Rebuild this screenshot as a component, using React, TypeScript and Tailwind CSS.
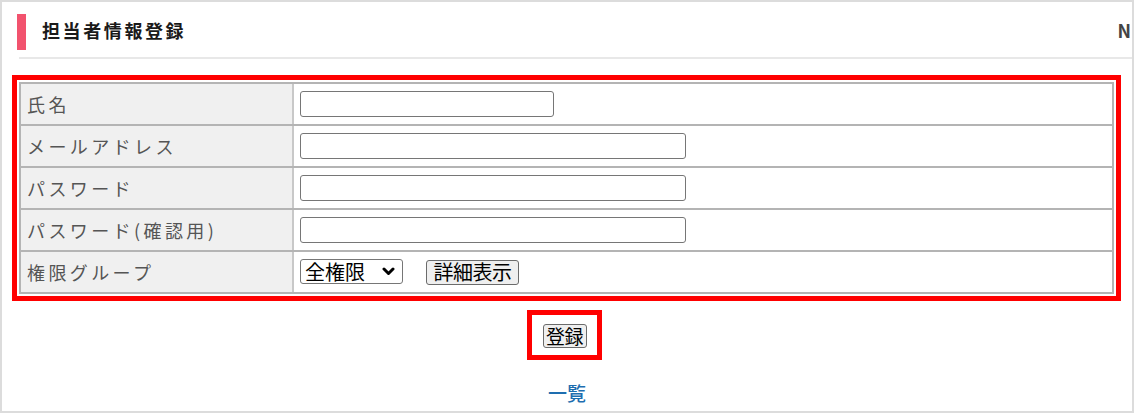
const rows = [
  { label: "氏名", kind: "short" },
  { label: "メールアドレス", kind: "long" },
  { label: "パスワード", kind: "long" },
  { label: "パスワード(確認用)", kind: "long" },
  { label: "権限グループ", kind: "group" },
]

const jp = "font-['Noto_Sans_CJK_JP','Noto_Sans',sans-serif]"

export default function App() {
  return (
    <div className={`w-[1134px] h-[413px] overflow-hidden border-2 border-[#dcdcdc] bg-white ${jp}`}>
      {/* Title */}
      <div className="mt-[12px] ml-[15px] flex h-[36px] items-center">
        <div className="h-full w-[9px] bg-[#f2536e]" />
        <h1 className="ml-[16px] mb-[4px] text-[18px] font-bold tracking-[2.6px] text-[#1a1a1a]">担当者情報登録</h1>
        <span className="ml-auto mr-[1px] mb-[4px] text-[18px] font-bold text-[#444]">N</span>
      </div>
      <div className="ml-[17px] mt-[7px] h-[2px] bg-[#e8e8e8]" />

      {/* Form */}
      <div className="ml-[10px] mt-[16px] w-[1109px] border-[5px] border-[#ff0000] p-[2px]">
        <div className="w-[1095px] border-2 border-[#b4b4b4]">
          {rows.map((r, i) => (
            <div key={r.label} className={`flex h-[40px] ${i > 0 ? "box-content border-t-2 border-[#b4b4b4]" : ""}`}>
              <div className="flex w-[273px] shrink-0 items-center border-r-2 border-[#c8c8c8] bg-[#f0f0f0] pl-[6px] text-[18px] tracking-[3.4px] text-[#555]">
                {r.label}
              </div>
              <div className="flex flex-1 items-center pl-[6px]">
                {r.kind === "short" && (
                  <input className="h-[26px] w-[254px] rounded-[3px] border border-[#767676] bg-white px-1 text-[16px] outline-none" />
                )}
                {r.kind === "long" && (
                  <input
                    type={r.label.startsWith("パスワード") ? "password" : "text"}
                    className="h-[26px] w-[386px] rounded-[3px] border border-[#767676] bg-white px-1 text-[16px] outline-none"
                  />
                )}
                {r.kind === "group" && (
                  <div className="flex items-center gap-[23px]">
                    <div className="relative">
                      <select className="h-[25px] w-[103px] appearance-none rounded-[3px] border border-[#767676] bg-white pl-[4px] text-[20px] leading-[22px] text-black outline-none">
                        <option>全権限</option>
                      </select>
                      <svg
                        className="pointer-events-none absolute right-[8px] top-[8px]"
                        width="13"
                        height="9"
                        viewBox="0 0 13 9"
                      >
                        <polyline points="2,2 6.5,6.5 11,2" fill="none" stroke="#000" strokeWidth="3" strokeLinecap="round" strokeLinejoin="round" />
                      </svg>
                    </div>
                    <button className="h-[25px] w-[93px] rounded-[3px] border border-[#6b6b6b] bg-[#efefef] text-[20px] leading-[22px] tracking-[-0.5px] text-black">
                      詳細表示
                    </button>
                  </div>
                )}
              </div>
            </div>
          ))}
        </div>
      </div>

      {/* Submit */}
      <div className="mt-[9px] flex justify-center">
        <div className="ml-[-5px] flex h-[50px] w-[75px] items-start justify-center border-[5px] border-[#ff0000] pt-[9px]">
          <button className="h-[24px] w-[44px] rounded-[3px] border border-[#6b6b6b] bg-[#efefef] text-[19px] leading-[20px] tracking-[-0.5px] text-black">
            登録
          </button>
        </div>
      </div>

      <div className="mt-[19px] text-center">
        <a href="#" className="text-[19px] font-medium text-[#1e6eb0]">一覧</a>
      </div>
    </div>
  )
}
